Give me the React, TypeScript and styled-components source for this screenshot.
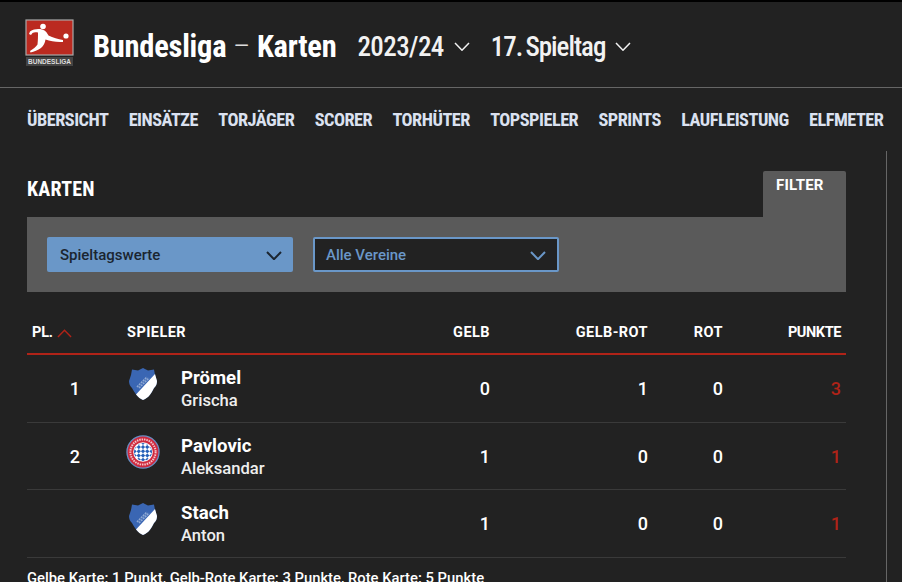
import React from "react";
import styled, { createGlobalStyle } from "styled-components";

const Global = createGlobalStyle`
  html, body { margin: 0; padding: 0; background: #222222; overflow: hidden; }
  #root { height: 582px; overflow: hidden; }
`;

const body = `"Roboto", "Liberation Sans", sans-serif`;

const Page = styled.div`
  width: 902px; height: 582px; overflow: hidden; background: #222222; color: #fff;
  border-top: 2px solid #000; box-sizing: border-box; font-family: ${body};
`;
const Header = styled.header`
  height: 86px; box-sizing: border-box; display: flex; align-items: center; padding: 4px 0 0 25px;
  border-bottom: 1px solid #666;
`;
const LogoWrap = styled.div`
  width: 49px; height: 50px; display: flex; flex-direction: column; align-items: center; margin-right: 19px; margin-top: -6px;
`;
const LogoText = styled.span`
  font: bold 6.5px/9px "Liberation Sans", sans-serif; color: #ddd; margin-top: 1px; background: #444; width: 47px; text-align: center;
`;
const Title = styled.h1`
  margin: 0; font: 700 30.5px/40px ${body}; font-stretch: 75%; letter-spacing: -.25px; color: #fff; white-space: nowrap;
`;
const Dash = styled.span` font-weight: 300; color: #ddd; `;
const Picker = styled.div`
  display: flex; align-items: center; gap: 10px; font: 500 27px/40px ${body}; font-stretch: 75%; color: #f2f2f2;
  letter-spacing: ${p => p.$ls}px; word-spacing: ${p => p.$ws}px; margin-left: ${p => p.$ml}px;
`;
const Nav = styled.nav`
  height: 62px; box-sizing: border-box; display: flex; gap: 20.25px; align-items: center;
  padding: 2px 0 0 27px; font: 700 18.3px/24px ${body}; font-stretch: 75%; letter-spacing: -.5px; color: #dbe1f0;
`;
const NavItem = styled.a` white-space: nowrap; `;
const Main = styled.div` display: flex; padding-left: 27px; height: 432px; `;
const Content = styled.div` width: 819px; flex: none; padding-top: 21px; `;
const SideRule = styled.div` margin: 1px 0 0 40px; width: 1px; background: #666; `;
const TitleRow = styled.div` display: flex; justify-content: space-between; height: 46px; `;
const SectionTitle = styled.h2`
  margin: 0; font: 700 20px/36px ${body}; font-stretch: 75%; letter-spacing: .2px; color: #fff;
`;
const FilterTab = styled.div`
  width: 83px; height: 46px; background: #5a5a5a; border-radius: 2px 2px 0 0; box-sizing: border-box;
  padding: 6px 0 0 13px; font: 700 15px/17px ${body}; color: #fff; letter-spacing: .2px;
`;
const FilterPanel = styled.div`
  height: 75px; background: #5a5a5a; display: flex; align-items: center; gap: 20px; padding: 0 20px;
`;
const Select = styled.div`
  width: 246px; height: 35px; box-sizing: border-box; border-radius: 2px; display: flex; align-items: center; justify-content: space-between;
  padding: 1px 11px 0 ${p => p.$active ? 13 : 11}px; font: 500 15px/18px ${body};
  background: ${p => p.$active ? "#6a97c8" : "#222222"};
  color: ${p => p.$active ? "#1b2530" : "#6a97c8"};
  border: ${p => p.$active ? "none" : "2px solid #6a97c8"};
`;
const grid = `display: grid; grid-template-columns: 100px 243px 125px 158px 75px 118px; align-items: center;`;
const HeadRow = styled.div`
  ${grid} height: 32px; margin-top: 25px; padding-bottom: 4px; border-bottom: 2px solid #b02318;
  font: 700 14.5px/18px ${body}; letter-spacing: .45px; color: #fff;
`;
const HeadCell = styled.div`
  display: flex; align-items: center; gap: 4px; justify-content: ${p => p.$right ? "flex-end" : "flex-start"};
  padding: ${p => p.$right ? "0 5px 0 0" : p.$first ? "0 0 0 5px" : "0"};
  letter-spacing: ${p => p.$ls ?? .45}px;
`;
const Row = styled.div`
  ${grid} height: 64.5px; padding-top: 2px; border-bottom: 1px solid #3a3a3a; font: 500 18px/20px ${body};
`;
const Place = styled.div` text-align: right; padding-right: 47px; `;
const Player = styled.div` display: flex; align-items: center; gap: 21px; `;
const Crest = styled.div`
  width: 34px; height: 36px; display: flex; align-items: center; justify-content: center; margin: 0 0 10px -1px;
`;
const Names = styled.div` display: flex; flex-direction: column; gap: 2px; `;
const Last = styled.span` font: 700 18.6px/22px ${body}; color: #fff; `;
const First = styled.span` font: 500 16.6px/20px ${body}; color: #eee; `;
const Num = styled.div`
  text-align: right; padding-right: 5px; color: ${p => p.$red ? "#b02318" : "#fff"};
`;
const Note = styled.p` margin: 10px 0 0; font: 500 14.8px/20px ${body}; color: #fff; white-space: nowrap; `;

const Chevron = ({ w = 16, h = 9, c = "currentColor", up = false, sw = 1.5 }: any) => (
  <svg width={w} height={h} viewBox="0 0 16 9" fill="none">
    <path d={up ? "M1 8.2 8 1l7 7.2" : "M1 1l7 7.2L15 1"} stroke={c} strokeWidth={sw} />
  </svg>
);

const BuliLogo = () => (
  <svg width="49" height="37" viewBox="0 0 49 37">
    <rect x="1" y="1" width="47" height="35" fill="#bb2a20" stroke="#a9a9a9" strokeWidth="1.2" />
    <circle cx="41" cy="17" r="2.6" fill="#fff" />
    <circle cx="18" cy="7.5" r="2.8" fill="#fff" />
    <path d="M5 12.5 C9 10 13 9.5 17 10.5 C21 11.5 22 14 23.5 16.5 C28 18.5 33 20 38 21 L38 23 C31 23.5 25.5 22 20.5 20.5 C20 24 18.5 27 16 29 C13 31 9 32.5 5.5 33.5 L5 32 C8 30 11 28 12.5 25.5 C13 21 13 17 13 13.5 C11 13 9 13 7.5 14 L6 16 L4 15 Z" fill="#fff" />
  </svg>
);

const Hoffenheim = () => (
  <svg width="30" height="34" viewBox="0 0 30 34">
    <path d="M15 1 L20 3.5 L26 2.5 L27 8 L29 14 C29 17 28 19 26 21 C24 25 21 31 15 33 C10 31 6 25 4 21 C2 19 1 17 1 14 L3 8 L4 2.5 L10 3.5 Z" fill="#3a66b3" />
    <path d="M27 7 L29 14 C29 17 28 19 26 21 C24 25 21 31 15 33 C12.5 32 10.2 30.2 8 27.5 Z" fill="#fff" />
    <path d="M9 20 L19 10 M11 21 L21 11" stroke="#8fa9d4" strokeWidth="1.6" strokeDasharray="2 .8" />
  </svg>
);

const Bayern = () => (
  <svg width="34" height="34" viewBox="0 0 34 34">
    <defs>
      <pattern id="rauten" width="6" height="6" patternUnits="userSpaceOnUse" patternTransform="rotate(45 17 17)">
        <rect width="6" height="6" fill="#fff" />
        <rect width="3" height="3" fill="#2560b8" />
        <rect x="3" y="3" width="3" height="3" fill="#2560b8" />
      </pattern>
    </defs>
    <circle cx="17" cy="17" r="16.7" fill="#6a8fc4" />
    <circle cx="17" cy="17" r="15.4" fill="#cf2a3e" />
    <circle cx="17" cy="17" r="9.8" fill="#fff" />
    <circle cx="17" cy="17" r="9" fill="url(#rauten)" />
    <circle cx="17" cy="17" r="12.6" fill="none" stroke="#f3c4cb" strokeWidth="2" strokeDasharray="1.5 .9" />
  </svg>
);

const navItems = ["ÜBERSICHT", "EINSÄTZE", "TORJÄGER", "SCORER", "TORHÜTER", "TOPSPIELER", "SPRINTS", "LAUFLEISTUNG", "ELFMETER"];
const rows = [
  { pl: "1", last: "Prömel", first: "Grischa", crest: <Hoffenheim />, y: 0, yr: 1, r: 0, p: 3 },
  { pl: "2", last: "Pavlovic", first: "Aleksandar", crest: <Bayern />, y: 1, yr: 0, r: 0, p: 1 },
  { pl: "", last: "Stach", first: "Anton", crest: <Hoffenheim />, y: 1, yr: 0, r: 0, p: 1 },
];

export default function App() {
  return (
    <Page>
      <Global />
      <Header>
        <LogoWrap><BuliLogo /><LogoText>BUNDESLIGA</LogoText></LogoWrap>
        <Title>Bundesliga <Dash>–</Dash> Karten</Title>
        <Picker $ml={21} $ls={-.6} $ws={0}>2023/24 <Chevron /></Picker>
        <Picker $ml={21} $ls={-1} $ws={-2}>17. Spieltag <Chevron /></Picker>
      </Header>
      <Nav>{navItems.map(n => <NavItem key={n}>{n}</NavItem>)}</Nav>
      <Main>
        <Content>
          <TitleRow>
            <SectionTitle>KARTEN</SectionTitle>
            <FilterTab>FILTER</FilterTab>
          </TitleRow>
          <FilterPanel>
            <Select $active>Spieltagswerte <Chevron sw={2} c="#1b2530" /></Select>
            <Select>Alle Vereine <Chevron sw={2} c="#6a97c8" /></Select>
          </FilterPanel>
          <HeadRow>
            <HeadCell $first $ls={-.2}>PL. <Chevron w={15} h={9} up c="#b02318" /></HeadCell>
            <HeadCell>SPIELER</HeadCell>
            <HeadCell $right>GELB</HeadCell>
            <HeadCell $right>GELB-ROT</HeadCell>
            <HeadCell $right>ROT</HeadCell>
            <HeadCell $right $ls={-.4}>PUNKTE</HeadCell>
          </HeadRow>
          {rows.map(r => (
            <Row key={r.last}>
              <Place>{r.pl}</Place>
              <Player>
                <Crest>{r.crest}</Crest>
                <Names><Last>{r.last}</Last><First>{r.first}</First></Names>
              </Player>
              <Num>{r.y}</Num>
              <Num>{r.yr}</Num>
              <Num>{r.r}</Num>
              <Num $red>{r.p}</Num>
            </Row>
          ))}
          <Note>Gelbe Karte: 1 Punkt, Gelb-Rote Karte: 3 Punkte, Rote Karte: 5 Punkte</Note>
        </Content>
        <SideRule />
      </Main>
    </Page>
  );
}
